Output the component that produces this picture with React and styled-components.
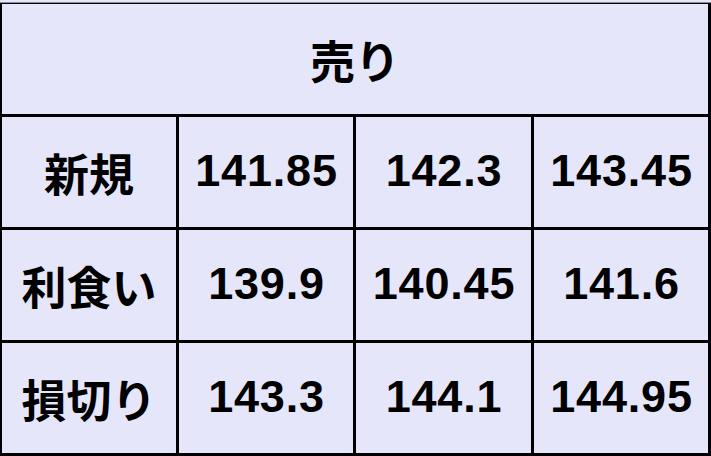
import React from 'react';
import styled, { createGlobalStyle } from 'styled-components';

const rows = [
  { label: '新規', values: ['141.85', '142.3', '143.45'] },
  { label: '利食い', values: ['139.9', '140.45', '141.6'] },
  { label: '損切り', values: ['143.3', '144.1', '144.95'] },
];

const Global = createGlobalStyle`
  html, body {
    margin: 0;
    padding: 0;
    background: #e6e6fa;
  }
`;

const Sheet = styled.div`
  width: 711px;
  height: 456px;
  box-sizing: border-box;
  margin-top: 2px;
  padding: 1px 3px 3px 2px;
  background: #000;
  border-top: 1px solid #8a8aa0;
  display: grid;
  grid-template-columns: 174px 174px 175px 174px;
  grid-template-rows: 110px 110px 110px 110px;
  gap: 3px;
  font-family: "Liberation Sans", "Noto Sans CJK JP", sans-serif;
  font-weight: bold;
  color: #000;
`;

const Cell = styled.div`
  background: #e6e6fa;
  display: flex;
  align-items: center;
  justify-content: center;
  font-size: 45px;
  grid-column: ${(p) => (p.$wide ? '1 / -1' : 'auto')};
`;

const Num = styled(Cell)`
  letter-spacing: 0.8px;
  padding: 0 0 3px 1px;
`;

const App = () => {
  return (
    <>
      <Global />
      <Sheet>
        <Cell $wide>売り</Cell>
        {rows.map((r) => (
          <React.Fragment key={r.label}>
            <Cell>{r.label}</Cell>
            {r.values.map((v) => (
              <Num key={v}>{v}</Num>
            ))}
          </React.Fragment>
        ))}
      </Sheet>
    </>
  );
};

export default App;
